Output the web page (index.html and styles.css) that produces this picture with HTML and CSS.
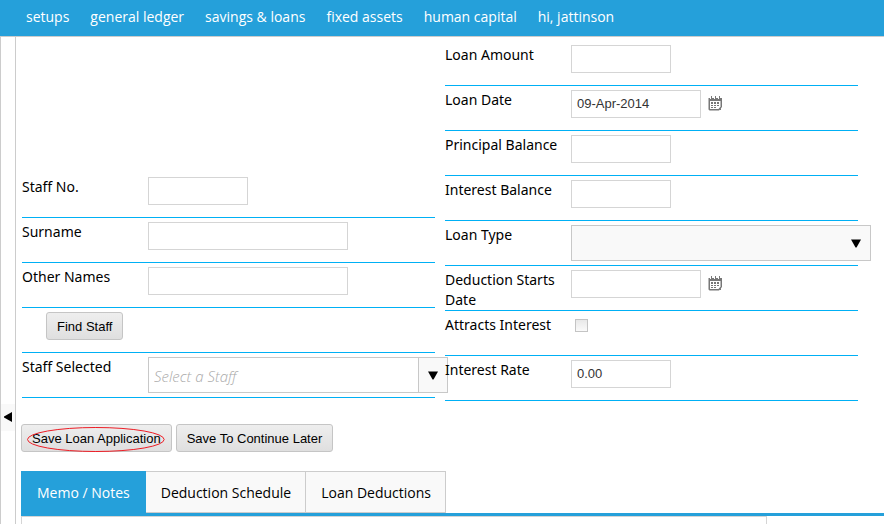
FILE: index.html
```html
<!DOCTYPE html>
<html lang="en">
<head>
<meta charset="utf-8">
<title>Loan Application</title>
<link rel="stylesheet" href="styles.css">
</head>
<body>
<svg class="sprite" aria-hidden="true">
  <symbol id="calendar" viewBox="0 0 15 15">
    <path d="M1 2H14V11L11 14.500H1.500L0.500 13.500V2.500Z" fill="#777"/>
    <path d="M2 5H12.500V10.500L10.500 13H2Z" fill="#fff"/>
    <path d="M3 0h1v3H3zM7 0h1v3H7zM11 0h1v3h-1z" fill="#777"/>
    <path d="M2 1h1v2H2zM6 1h1v2H6zM10 1h1v2h-1z" fill="#fff"/>
    <path d="M3 6h2v2H3zM6 6h2v2H6zM9 6h2v2H9zM3 9h2v1H3zM6 9h2v1H6zM9 9h2v1H9zM3 11h2v1H3zM6 11h2v1H6zM13 11.500v2.500h-2z" fill="#777"/>
  </symbol>
  <symbol id="arrow" viewBox="0 0 10 9"><path d="M0 0.500H10L5.5 8.500H4.500Z" fill="#000"/></symbol>
</svg>
<nav class="topbar">
  <a href="#">setups</a>
  <a href="#">general ledger</a>
  <a href="#">savings &amp; loans</a>
  <a href="#">fixed assets</a>
  <a href="#">human capital</a>
  <a href="#">hi, jattinson</a>
</nav>
<div class="page">
  <aside class="splitter">
    <button class="collapse" type="button" aria-label="Collapse"><svg viewBox="0 0 8 10"><path d="M8 0V10L0 5.500V4.500Z"/></svg></button>
  </aside>
  <main class="content">
    <form>
      <div class="columns">
        <div class="column left">
          <div class="row"><label for="staff-no">Staff No.</label><input class="box short" id="staff-no" type="text"></div>
          <div class="row"><label for="surname">Surname</label><input class="box long" id="surname" type="text"></div>
          <div class="row"><label for="names">Other Names</label><input class="box long" id="names" type="text"></div>
          <div class="row indented"><button class="btn" type="button">Find Staff</button></div>
          <div class="row"><label for="staff">Staff Selected</label>
            <div class="combo">
              <input id="staff" type="text" placeholder="Select a Staff">
              <button type="button" aria-label="Open list"><svg class="arrow"><use href="#arrow"/></svg></button>
            </div>
          </div>
        </div>
        <div class="column">
          <div class="row"><label for="amount">Loan Amount</label><input class="box short" id="amount" type="text"></div>
          <div class="row"><label for="date">Loan Date</label><input class="box date" id="date" type="text" value="09-Apr-2014"><button class="picker" type="button" aria-label="Pick date"><svg><use href="#calendar"/></svg></button></div>
          <div class="row"><label for="principal">Principal Balance</label><input class="box short" id="principal" type="text"></div>
          <div class="row"><label for="interest">Interest Balance</label><input class="box short" id="interest" type="text"></div>
          <div class="row"><label for="type">Loan Type</label>
            <div class="select"><select id="type"><option></option></select><svg class="arrow"><use href="#arrow"/></svg></div>
          </div>
          <div class="row"><label for="starts">Deduction Starts Date</label><input class="box date" id="starts" type="text"><button class="picker" type="button" aria-label="Pick date"><svg><use href="#calendar"/></svg></button></div>
          <div class="row"><label for="attracts">Attracts Interest</label><input class="check" id="attracts" type="checkbox"></div>
          <div class="row"><label for="rate">Interest Rate</label><input class="box short" id="rate" type="text" value="0.00"></div>
        </div>
      </div>
      <div class="actions">
        <button class="btn" type="button">Save Loan Application<svg class="ring" viewBox="0 0 138 25" preserveAspectRatio="none"><ellipse cx="69" cy="12.5" rx="68.500" ry="12"/></svg></button>
        <button class="btn" type="button">Save To Continue Later</button>
      </div>
    </form>
    <div class="tabs" role="tablist">
      <button class="tab active" type="button" role="tab" aria-selected="true">Memo / Notes</button>
      <button class="tab" type="button" role="tab" aria-selected="false">Deduction Schedule</button>
      <button class="tab" type="button" role="tab" aria-selected="false">Loan Deductions</button>
    </div>
    <div class="panel" role="tabpanel"></div>
  </main>
</div>
</body>
</html>
```
FILE: styles.css
```css
* { box-sizing: border-box; }

body {
  margin: 0;
  height: 100vh;
  display: flex;
  flex-direction: column;
  overflow: hidden;
  background: #fff;
  color: #000;
  font: 14px/20px "Noto Sans", "Open Sans", sans-serif;
}

button, input, select { margin: 0; font: inherit; color: inherit; }
button { padding: 0; cursor: pointer; }
svg { display: block; }
.sprite { display: none; }

.topbar {
  display: flex;
  flex: none;
  gap: 21px;
  padding: 7px 26px 9px;
  background: #25a0da;
}
.topbar a { color: #fff; text-decoration: none; font-family: "Open Sans", sans-serif; white-space: nowrap; }

.page { flex: 1; display: flex; min-height: 0; border-top: 1px solid #ccc; }

.splitter {
  flex: none;
  width: 16px;
  padding-top: 367px;
  border: solid #ccc;
  border-width: 0 1px;
}
.collapse { display: flex; align-items: center; justify-content: flex-end; width: 100%; height: 27px; padding: 0 3px 2px 0; border: 0; background: #f9f9f9; }
.collapse svg { width: 8px; height: 10px; }

.content { flex: 1; min-width: 0; display: flex; flex-direction: column; padding-top: 4px; }

.columns { display: grid; grid-template-columns: 1fr 1fr; gap: 10px; padding: 0 26px 0 6px; }
.column { min-width: 0; }
.left { display: flex; flex-direction: column; justify-content: flex-end; padding-bottom: 3px; }

.row { display: flex; align-items: flex-start; height: 45px; padding-top: 4px; border-bottom: 1px solid #00b0f5; }
.row label { flex: none; width: 126px; padding-right: 10px; }
.indented { padding-left: 24px; }

.box {
  flex: none;
  height: 28px;
  padding: 0 5px 2px;
  border: 1px solid #d5d5d5;
  background: #fff;
  color: #333;
  font: 13px/20px "Liberation Sans", Arial, sans-serif;
}
.short { width: 100px; }
.date { width: 130px; }
.long { width: 200px; }

.picker { margin: 6px 0 0 7px; border: 0; background: none; }
.picker svg { width: 15px; height: 15px; }
.arrow { width: 10px; height: 9px; }

.combo { flex: none; display: flex; width: 300px; height: 36px; border: 1px solid #c8c8c8; background: #fff; }
.combo input { flex: 1; min-width: 0; padding: 2px 5px 0; border: 0; background: none; }
.combo input, .combo input::placeholder { font-family: "Open Sans", sans-serif; font-size: 15px; font-style: italic; font-weight: 300; }
.combo input::placeholder { color: #aaa; opacity: 1; }
.combo button { display: flex; align-items: center; justify-content: center; width: 29px; border: 0; border-left: 1px solid #c8c8c8; background: #f9f9f9; }

.select { flex: none; display: grid; width: 300px; height: 36px; align-items: center; }
.select > * { grid-area: 1 / 1; }
.select select { appearance: none; width: 100%; height: 100%; padding: 0 28px 0 6px; border: 1px solid #c8c8c8; border-radius: 0; background: #f9f9f9; }
.select .arrow { justify-self: end; margin-right: 10px; pointer-events: none; }

.check { appearance: none; width: 13px; height: 13px; margin: 4px; border: 1px solid #c4c4c4; background: linear-gradient(#e8e8e8, #fafafa); }

.btn {
  position: relative;
  height: 28px;
  padding: 1px 10px 0;
  border: 1px solid #c5c5c5;
  border-radius: 3px;
  background: linear-gradient(#eee, #dfdfdf);
  font: 13px/20px "Liberation Sans", Arial, sans-serif;
  white-space: nowrap;
}
.ring { position: absolute; left: 5px; top: 2px; width: calc(100% - 11px); height: 25px; fill: none; stroke: #ed1c24; overflow: visible; }

.actions { display: flex; gap: 4px; padding: 23px 5px 19px; }

.tabs { flex: none; display: flex; margin-left: 5px; border-bottom: 3px solid #25a0da; }
.tab { height: 42px; padding: 2px 14px 0 15px; border: 1px solid #ccc; border-left-width: 0; background: #f9f9f9; font-family: "Open Sans", sans-serif; white-space: nowrap; }
.tab.active { padding: 2px 15px 0 16px; border-color: #25a0da; background: #25a0da; color: #fff; }

.panel { flex: 1; margin: 0 117px 0 5px; border: 1px solid #d5d5d5; border-bottom: 0; }
```
